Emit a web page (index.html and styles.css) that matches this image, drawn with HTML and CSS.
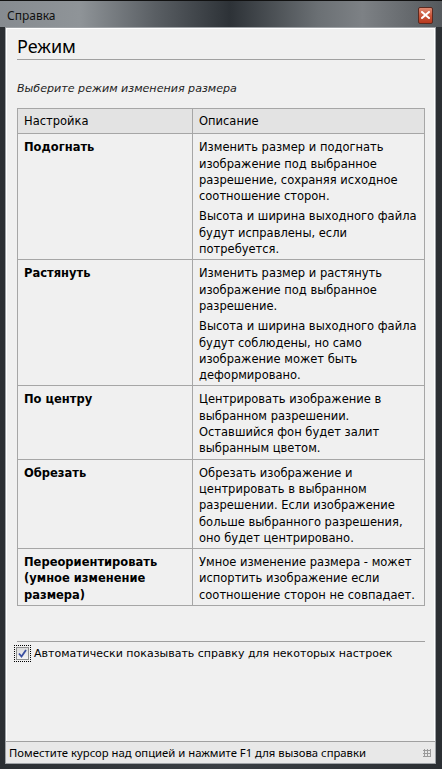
FILE: index.html
```html
<!DOCTYPE html>
<html lang="ru">
<head>
    <meta charset="UTF-8">
    <title>Справка</title>
    <link rel="stylesheet" href="styles.css">
</head>
<body>
    <div class="window">
        <div class="titlebar">
            <span class="title">Справка</span>
            <span class="close-btn">
                <svg width="9" height="8" viewBox="0 0 9 8">
                    <path d="M1 1 L8 7 M8 1 L1 7" stroke="#fff" stroke-width="2" stroke-linecap="square"/>
                </svg>
            </span>
        </div>

        <div class="frame">
            <div class="client">
                <div class="content">
                    <h1>Режим</h1>
                    <p class="intro">Выберите режим изменения размера</p>

                    <table>
                        <thead>
                            <tr>
                                <th class="col-name">Настройка</th>
                                <th>Описание</th>
                            </tr>
                        </thead>
                        <tbody>
                            <tr>
                                <td class="col-name"><b>Подогнать</b></td>
                                <td>
                                    <p>Изменить размер и подогнать изображение под выбранное разрешение, сохраняя исходное соотношение сторон.</p>
                                    <p>Высота и ширина выходного файла будут исправлены, если потребуется.</p>
                                </td>
                            </tr>
                            <tr>
                                <td class="col-name"><b>Растянуть</b></td>
                                <td>
                                    <p>Изменить размер и растянуть изображение под выбранное разрешение.</p>
                                    <p>Высота и ширина выходного файла будут соблюдены, но само изображение может быть деформировано.</p>
                                </td>
                            </tr>
                            <tr>
                                <td class="col-name"><b>По центру</b></td>
                                <td>
                                    <p>Центрировать изображение в выбранном разрешении. Оставшийся фон будет залит выбранным цветом.</p>
                                </td>
                            </tr>
                            <tr>
                                <td class="col-name"><b>Обрезать</b></td>
                                <td>
                                    <p>Обрезать изображение и центрировать в выбранном разрешении. Если изображение больше выбранного разрешения, оно будет центрировано.</p>
                                </td>
                            </tr>
                            <tr>
                                <td class="col-name"><b>Переориентировать (умное изменение размера)</b></td>
                                <td>
                                    <p>Умное изменение размера - может испортить изображение если соотношение сторон не совпадает.</p>
                                </td>
                            </tr>
                        </tbody>
                    </table>

                    <div class="separator"></div>

                    <label class="auto-help">
                        <span class="checkbox">
                            <svg width="9" height="9" viewBox="0 0 9 9">
                                <path d="M1 4.5 L3.5 7.5 L8 1" fill="none" stroke="#3a4fa0" stroke-width="1.8"/>
                            </svg>
                        </span>
                        <span>Автоматически показывать справку для некоторых настроек</span>
                    </label>
                </div>

                <div class="statusbar">
                    <span>Поместите курсор над опцией и нажмите F1 для вызова справки</span>
                    <span class="grip"></span>
                </div>
            </div>
        </div>
    </div>
</body>
</html>
```

FILE: styles.css
```css
body {
    margin: 0;
    background-color: #1c1f22;
    font-family: "DejaVu Sans", Verdana, sans-serif;
    color: #000;
}

.window {
    width: 442px;
    height: 769px;
    display: flex;
    flex-direction: column;
    background: linear-gradient(90deg, #2b2f33 0%, #3a3f44 50%, #2b2f33 100%);
}

.titlebar {
    height: 27px;
    display: flex;
    align-items: center;
    justify-content: space-between;
    padding: 0 9px 0 7px;
    background: linear-gradient(90deg, #868b90 0%, #8f9498 18%, #5a5f64 35%, #2d3237 52%, #6b7074 72%, #7d8185 82%, #55595d 100%);
    border-top: 1px solid #111;
    box-sizing: border-box;
}

.title {
    font-family: "Noto Sans", sans-serif;
    font-size: 12px;
    color: #111;
    margin-top: 2px;
}

.close-btn {
    width: 13px;
    height: 15px;
    display: flex;
    align-items: center;
    justify-content: center;
    background: linear-gradient(180deg, #e08a72 0%, #c9573c 50%, #b8391e 100%);
    border: 1px solid #5a2a20;
    border-radius: 2px;
    margin-top: 2px;
}

.frame {
    flex: 1;
    display: flex;
    padding: 0 6px 5px 5px;
}

.client {
    flex: 1;
    display: flex;
    flex-direction: column;
    background-color: #f0f0f0;
    border: 1px solid #9ea2a6;
    box-shadow: inset 0 0 0 1px #fff;
}

.content {
    flex: 1;
    padding: 6px 10px 0 11px;
}

h1 {
    margin: 0;
    padding: 0 0 1px;
    font-family: "Noto Sans", sans-serif;
    font-size: 18px;
    font-weight: normal;
    line-height: 24px;
    border-bottom: 1px solid #a0a0a0;
}

.intro {
    margin: 22px 0 13px;
    font-style: italic;
    font-size: 11.1px;
    line-height: 13px;
    color: #222;
}

table {
    width: 100%;
    border-collapse: collapse;
    font-size: 11.5px;
    line-height: 16.3px;
}

th, td {
    border: 1px solid #a6a6a6;
    padding: 5px 6px 2px 6px;
    text-align: left;
    vertical-align: top;
}

th {
    background-color: #e3e3e3;
    font-weight: normal;
    padding: 4px 6px 4px 6px;
}

.col-name {
    width: 162px;
}

td p {
    margin: 0 0 4px;
}

td p:last-child {
    margin-bottom: 0;
}

.separator {
    margin-top: 35px;
    border-top: 1px solid #a0a0a0;
}

.auto-help {
    display: flex;
    align-items: center;
    gap: 5px;
    margin-top: 5px;
    margin-left: -1px;
    font-size: 11px;
}

.checkbox {
    width: 11px;
    height: 11px;
    display: flex;
    align-items: center;
    justify-content: center;
    border: 1px solid #8e8f8f;
    background: linear-gradient(180deg, #dcdcdc, #f4f4f4);
    outline: 1px dotted #000;
    outline-offset: 1px;
}

.statusbar {
    height: 21px;
    display: flex;
    align-items: center;
    justify-content: space-between;
    padding: 0 4px 0 3px;
    border-top: 1px solid #a0a0a0;
    background-color: #e8e8e8;
    font-family: "Noto Sans", sans-serif;
    font-size: 11.3px;
}

.grip {
    width: 8px;
    height: 8px;
    background: radial-gradient(circle, #9a9a9a 1px, transparent 1.2px) 0 0 / 3px 3px;
}
```
